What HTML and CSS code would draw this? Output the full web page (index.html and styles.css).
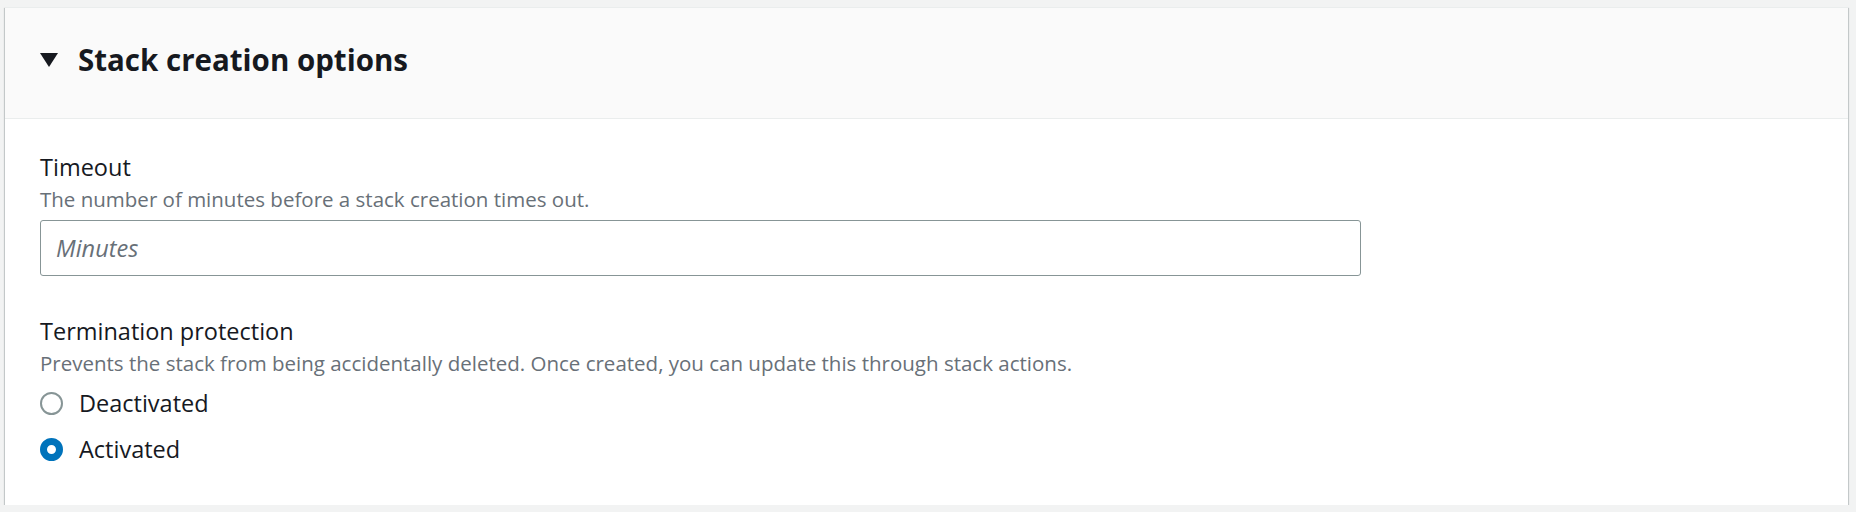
FILE: index.html
```html
<!DOCTYPE html>
<html lang="en">
<head>
    <meta charset="UTF-8">
    <meta name="viewport" content="width=device-width, initial-scale=1.0">
    <title>Stack creation options</title>
    <link rel="stylesheet" href="styles.css">
</head>
<body>
    <div class="page">
        <section class="panel">
            <header class="panel-header">
                <span class="caret"></span>
                <h2>Stack creation options</h2>
            </header>
            <div class="panel-body">
                <div class="field">
                    <label for="timeout">Timeout</label>
                    <p class="hint">The number of minutes before a stack creation times out.</p>
                    <input type="text" id="timeout" placeholder="Minutes">
                </div>

                <div class="field field-radios">
                    <label>Termination protection</label>
                    <p class="hint">Prevents the stack from being accidentally deleted. Once created, you can update this through stack actions.</p>
                    <div class="radio-row">
                        <input type="radio" name="protection" id="deactivated">
                        <label for="deactivated">Deactivated</label>
                    </div>
                    <div class="radio-row">
                        <input type="radio" name="protection" id="activated" checked>
                        <label for="activated">Activated</label>
                    </div>
                </div>
            </div>
        </section>
    </div>
</body>
</html>
```
FILE: styles.css
```css
body {
    font-family: 'Open Sans', 'Noto Sans', sans-serif;
    background-color: #f2f3f3;
    color: #16191f;
    margin: 0;
    padding: 0;
}
.page {
    padding: 7px 8px 0 5px;
}
.panel {
    background: #fff;
    border-top: 1px solid #eaeded;
    box-shadow: 0 1px 1px 0 rgba(0,28,36,0.3), 1px 1px 1px 0 rgba(0,28,36,0.15), -1px 1px 1px 0 rgba(0,28,36,0.15);
}
.panel-header {
    display: flex;
    align-items: center;
    gap: 20px;
    padding: 34px 35px 40px;
    background: #fafafa;
    border-bottom: 1px solid #eaeded;
}
.panel-header h2 {
    margin: 0;
    font-size: 29.5px;
    line-height: 36px;
    font-weight: 700;
}
.caret {
    width: 0;
    height: 0;
    border-left: 9px solid transparent;
    border-right: 9px solid transparent;
    border-top: 14px solid #16191f;
}
.panel-body {
    padding: 32px 35px 33px;
}
.field {
    max-width: 1321px;
}
.field label {
    display: block;
    font-size: 23.5px;
    line-height: 32px;
}
.hint {
    margin: 2px 0 0;
    font-size: 20.5px;
    line-height: 28px;
    color: #687078;
}
.field input[type="text"] {
    display: block;
    box-sizing: border-box;
    width: 100%;
    height: 56px;
    margin-top: 7px;
    padding: 0 15px;
    border: 1px solid #879596;
    border-radius: 3px;
    font-family: inherit;
    font-size: 23.5px;
    color: #16191f;
}
.field input::placeholder {
    color: #687078;
    font-style: italic;
}
.field-radios {
    margin-top: 39px;
}
.field-radios .hint {
    margin-bottom: 3px;
}
.radio-row {
    display: flex;
    align-items: center;
    gap: 16px;
    height: 46px;
}
.radio-row input {
    appearance: none;
    -webkit-appearance: none;
    box-sizing: border-box;
    width: 23px;
    height: 23px;
    margin: 0;
    border: 2px solid #879596;
    border-radius: 50%;
    background: #fff;
}
.radio-row input:checked {
    border: 7.5px solid #0073bb;
}
.radio-row label {
    display: inline;
}
```
